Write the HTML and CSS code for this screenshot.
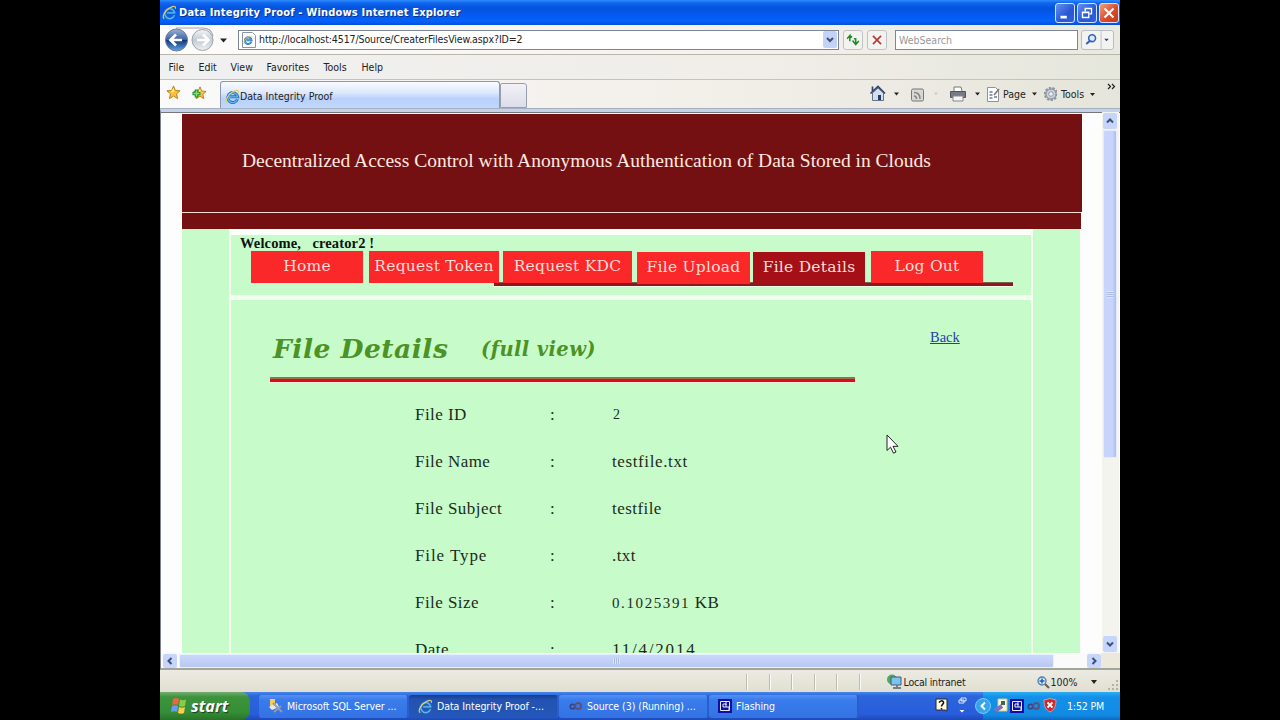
FILE: index.html
```html
<!DOCTYPE html>
<html lang="en">
<head>
<meta charset="utf-8">
<title>Data Integrity Proof - Windows Internet Explorer</title>
<link rel="stylesheet" href="styles.css">
</head>
<body>
<svg class="defs" width="0" height="0">
  <defs>
    <linearGradient id="orb" x1="0" y1="0" x2="0" y2="1"><stop offset="0" stop-color="#9cb4d4"/><stop offset=".48" stop-color="#3a63a4"/><stop offset=".52" stop-color="#12377c"/><stop offset="1" stop-color="#5fa8e8"/></linearGradient>
    <linearGradient id="orb2" x1="0" y1="0" x2="0" y2="1"><stop offset="0" stop-color="#f4f6f8"/><stop offset=".5" stop-color="#c3cad2"/><stop offset="1" stop-color="#eef1f4"/></linearGradient>
    <symbol id="ie" viewBox="0 0 16 16">
      <path d="M13.300 10.800A5.300 5.300 0 1 1 13.500 8.300H5.500" fill="none" stroke="#1f6fc0" stroke-width="3.200"/>
      <path d="M13.300 10.800A5.300 5.300 0 1 1 13.500 8.300H5.500" fill="none" stroke="#62b9f0" stroke-width="1.300"/>
      <path d="M2.400 14.600C-.6 12.800 3 6.500 8 3.300c4-2.600 7.400-2.300 6.200.7" fill="none" stroke="#e3cf6c" stroke-width="1.200"/>
    </symbol>
    <symbol id="star" viewBox="0 0 16 16"><path d="M8 1l2 4.800 5 .4-3.800 3.300 1.200 5L8 11.800l-4.400 2.700 1.200-5L1 6.200l5-.4z" fill="#fcc23c" stroke="#b87912"/><path d="M8 3l1 4-4 1z" fill="#fff1a4"/></symbol>
    <symbol id="app" viewBox="0 0 14 14"><rect width="14" height="14" fill="#1010a0"/><path d="M2.500 2.500h9v9h-9zM5 5h3v3H5zM8 8h3v3M8 2v4" fill="none" stroke="#e8e8ff"/></symbol>
    <symbol id="inf" viewBox="0 0 14 8"><circle cx="4" cy="4.500" r="2.300" fill="none" stroke="#33448c" stroke-width="1.600"/><circle cx="9.600" cy="4" r="3" fill="none" stroke="#5a5276" stroke-width="1.800"/></symbol>
  </defs>
</svg>
<div class="window">
  <div class="titlebar">
    <svg width="15" height="15"><use href="#ie"/></svg>
    <span class="title">Data Integrity Proof - Windows Internet Explorer</span>
    <div class="winbtns">
      <svg class="wb" viewBox="0 0 20 20"><path d="M5 14.500h7" stroke="#fff" stroke-width="3"/></svg>
      <svg class="wb" viewBox="0 0 20 20"><path d="M8 8V5h7v6h-2M5 9h7v6H5zM5 9.500h7" fill="none" stroke="#fff" stroke-width="1.500"/></svg>
      <svg class="wb close" viewBox="0 0 20 20"><path d="M5 5l10 10M15 5L5 15" stroke="#fff" stroke-width="2.300"/></svg>
    </div>
  </div>

  <div class="addressbar">
    <svg class="navorbs" width="66" height="28" viewBox="0 0 66 28">
      <path d="M16 2h27c6 0 9 4 10 8" fill="none" stroke="#a3a8ae" stroke-width="1.200"/>
      <circle cx="16.500" cy="14" r="11" fill="url(#orb)" stroke="#6f7f98"/>
      <path d="M22 14H11.500M16 8.500L10.500 14l5.500 5.500" fill="none" stroke="#fff" stroke-width="2.700"/>
      <circle cx="42.500" cy="14" r="10.500" fill="url(#orb2)" stroke="#9ba3ac"/>
      <path d="M37 14h10.500M43 8.500l5.500 5.500-5.500 5.500" fill="none" stroke="#fbfcfd" stroke-width="2.700"/>
      <path d="M60 12.500h7l-3.500 4z" fill="#222"/>
    </svg>
    <div class="urlbox">
      <svg width="16" height="16" viewBox="0 0 16 16"><path d="M1.500.5h10l3 3v12h-13z" fill="#fff" stroke="#8b93a5"/><use href="#ie" x="2" y="3" width="10" height="10"/></svg>
      <span class="url">http://localhost:4517/Source/CreaterFilesView.aspx?ID=2</span>
      <svg class="drop" viewBox="0 0 14 15"><path d="M4 6l3 3 3-3" fill="none" stroke="#39517c" stroke-width="2"/></svg>
    </div>
    <svg class="sqbtn" viewBox="0 0 20 20"><path d="M3.500 8.500L6.500 5v6.500M6.500 5l2.500 2M9.500 10.500L13 15l3.500-4M13 15V8.500h-2" fill="none" stroke="#268a2c" stroke-width="1.700"/></svg>
    <svg class="sqbtn stop" viewBox="0 0 20 20"><path d="M5.500 5.500l9 9M14.500 5.500l-9 9" stroke="#b93a3e" stroke-width="1.900"/></svg>
    <div class="search">WebSearch</div>
    <svg class="findbtn" viewBox="0 0 33 20"><path d="M20.500 0v20" stroke="#b9bdc4"/><circle cx="10.500" cy="8" r="3.800" fill="#dceafa" stroke="#3864b4" stroke-width="1.800"/><path d="M8 11l-4 3.500" stroke="#3864b4" stroke-width="2.300"/><path d="M24 8.500h5l-2.500 3z" fill="#2c4478"/></svg>
  </div>

  <div class="menubar"><span>File</span><span>Edit</span><span>View</span><span>Favorites</span><span>Tools</span><span>Help</span></div>

  <div class="commandbar">
    <svg class="fav" width="50" height="20" viewBox="0 0 50 20"><use href="#star" x="0" y="2" width="15" height="15"/><use href="#star" x="27" y="3" width="14" height="14"/><path d="M30.500 6.500v8M26.500 10.500h8" stroke="#218c2e" stroke-width="3.600"/><path d="M30.500 7.500v6M27.500 10.500h6" stroke="#8ae078" stroke-width="1.400"/></svg>
    <div class="tab"><svg width="15" height="15"><use href="#ie"/></svg><span>Data Integrity Proof</span></div>
    <div class="newtab"></div>
    <div class="cmds">
      <svg width="131" height="20" viewBox="0 0 131 20">
        <path d="M3.500 9v7.500h11V9L9 4z" fill="#d3deef" stroke="#66718a"/><path d="M1.500 9.500L9 2.500l7 7M3.500 8V2.500" fill="none" stroke="#30466d" stroke-width="1.700"/><path d="M9 11h3v5H9z" fill="#263c66"/>
        <path d="M25 8.500h5l-2.500 3z" fill="#222"/>
        <rect x="42.500" y="5" width="12" height="12" rx="1.500" fill="#d7d7d5" stroke="#777"/><path d="M45 8.500c4 0 6 2.500 6 6.500M45 12c2 0 2.500 1 2.500 3" fill="none" stroke="#858585" stroke-width="1.500"/>
        <path d="M65 8.500h4l-2 2.500z" fill="#c8c8c2"/>
        <path d="M85 7V3h7l1 4" fill="#fff" stroke="#777"/><path d="M81.500 7.500h15v6h-15z" fill="#777a82" stroke="#50545e"/><path d="M84 12h10v5H84z" fill="#f3f4f7" stroke="#888"/>
        <path d="M106 8.500h5l-2.500 3z" fill="#222"/>
        <path d="M118.500 3.500h8l3 3v11h-11z" fill="#fff" stroke="#8f9297"/><path d="M120.500 8h3M120.500 11h3M120.500 14h3M125 13h3" stroke="#667b9c" stroke-width="1.500"/><path d="M125 11l5-6" stroke="#777" stroke-width="1.500"/>
      </svg>
      <span class="page-l">Page</span>
      <svg width="30" height="20" viewBox="0 0 30 20"><path d="M5 8.500h5l-2.500 3z" fill="#222"/><circle cx="24" cy="10" r="5.800" fill="#cbd1da" stroke="#8e959f" stroke-width="2.600" stroke-dasharray="2.300 1.200"/><circle cx="24" cy="10" r="5" fill="#cbd1da" stroke="#858e9c"/><circle cx="24" cy="10" r="2.300" fill="#f0f1ef" stroke="#9099a6"/></svg>
      <span class="tools-l">Tools</span>
      <svg width="30" height="26" viewBox="0 0 30 26"><path d="M4 12h5l-2.500 3z" fill="#222"/><path d="M22 3l2.500 2.500L22 8M26 3l2.500 2.500L26 8" fill="none" stroke="#222" stroke-width="1.200"/></svg>
    </div>
  </div>

  <div class="viewport">
    <div class="page">
      <div class="banner">Decentralized Access Control with Anonymous Authentication of Data Stored in Clouds</div>
      <div class="strip"></div>
      <div class="columns">
        <div class="side left"></div>
        <div class="center">
          <div class="top">
            <div class="welcome">Welcome,&nbsp;&nbsp; creator2 !</div>
            <div class="nav">
              <a class="w1">Home</a><a class="w2">Request Token</a><a class="w3">Request KDC</a><a class="w4 low">File Upload</a><a class="w5 low current">File Details</a><a class="w6">Log Out</a>
            </div>
            <div class="navline"></div>
          </div>
          <div class="details">
            <div class="heading"><h1>File Details</h1><h2>(full view)</h2><a class="back">Back</a></div>
            <div class="rule"></div>
            <div class="fields">
              <span>File ID</span><span>:</span><span class="id">2</span>
              <span>File Name</span><span>:</span><span class="name">testfile.txt</span>
              <span>File Subject</span><span>:</span><span>testfile</span>
              <span class="type">File Type</span><span>:</span><span>.txt</span>
              <span>File Size</span><span>:</span><span class="size"><small>0.1025391</small> KB</span>
              <span>Date</span><span>:</span><span class="date">11/4/2014</span>
            </div>
          </div>
        </div>
        <div class="side right"></div>
      </div>
    </div>
    <div class="vscroll">
      <svg class="sbtn" viewBox="0 0 14 16"><path d="M4 9.500l3-3 3 3" fill="none" stroke="#39517c" stroke-width="2"/></svg>
      <div class="vthumb"><i></i></div>
      <div class="vtrack"></div>
      <svg class="sbtn" viewBox="0 0 14 16"><path d="M4 6.500l3 3 3-3" fill="none" stroke="#39517c" stroke-width="2"/></svg>
    </div>
  </div>
  <div class="hscroll">
    <svg class="hbtn" viewBox="0 0 14 14"><path d="M8.500 4l-3 3 3 3" fill="none" stroke="#39517c" stroke-width="2"/></svg>
    <div class="hthumb"><i></i></div>
    <div class="htrack"></div>
    <svg class="hbtn" viewBox="0 0 14 14"><path d="M5.500 4l3 3-3 3" fill="none" stroke="#39517c" stroke-width="2"/></svg>
    <div class="corner"></div>
  </div>

  <div class="status">
    <i></i><i></i><i></i><i></i><i></i><i></i>
    <div class="zone"><svg width="17" height="16" viewBox="0 0 17 16"><circle cx="6" cy="5.500" r="5" fill="#4dac62"/><path d="M5 3h10v8H5z" fill="#7cc3ef" stroke="#455b78"/><path d="M7 14h8M11 11v3" stroke="#71808c" stroke-width="2"/></svg><span>Local intranet</span></div>
    <div class="zoom"><svg width="13" height="13" viewBox="0 0 13 13"><circle cx="5" cy="5" r="4" fill="#d6ebfb" stroke="#4d80b4" stroke-width="1.300"/><path d="M2.500 5h5M5 2.500v5" stroke="#285eaa" stroke-width="1.500"/><path d="M8 8l4 4" stroke="#635e58" stroke-width="2.200"/></svg><span>100%</span><svg class="zd" width="28" height="18" viewBox="0 0 28 18"><path d="M0 7h6l-3 4z" fill="#222"/><path d="M25 8h2M21 12h2M25 12h2M17 16h2M21 16h2M25 16h2" stroke="#b5b39f" stroke-width="2"/></svg></div>
  </div>

  <div class="taskbar">
    <div class="start"><svg width="18" height="18" viewBox="0 0 18 18"><path d="M3 2q3-2 6 0L8 8Q5 6.500 2 8z" fill="#ee6542"/><path d="M10 2.500q3 1.500 6 0L15 9q-3 1.500-6 0z" fill="#8bcb4a"/><path d="M2 9q3-1.500 6 0l-1 6q-3-1.500-6 0z" fill="#6b9cf1"/><path d="M9 10q3 1.500 6 0l-1 6q-3 1.500-6 0z" fill="#f8cf42"/></svg><span>start</span></div>
    <div class="task t1"><svg width="15" height="16" viewBox="0 0 15 16"><path d="M2 1h5v8H2z" fill="#f4cd5d"/><path d="M1 9l8-4 2 4-7 3z" fill="#e7e8ea"/><path d="M5 5l9 9M13 8l-7 6" stroke="#929bab" stroke-width="2"/></svg><span>Microsoft SQL Server ...</span></div>
    <div class="task t2 active"><svg width="15" height="15"><use href="#ie"/></svg><span>Data Integrity Proof -...</span></div>
    <div class="task t3"><svg width="15" height="8"><use href="#inf"/></svg><span>Source (3) (Running) ...</span></div>
    <div class="task t4"><svg width="14" height="14"><use href="#app"/></svg><span>Flashing</span></div>
    <svg class="lang" width="34" height="28" viewBox="0 0 34 28"><path d="M1 7h11v12l-2-1H1z" fill="#fffbe3" stroke="#292921"/><path d="M4 10.500q2.500-3 4.500-.5c1 2-2 2-2 4.500M6.500 16v1.500" fill="none" stroke="#111" stroke-width="1.500"/><path d="M26 6h5v3h-5zM24 8h5v3h-5z" fill="#2c61da" stroke="#dbe7ff"/><path d="M24.500 18h5L27 20.500z" fill="#fff"/></svg>
    <div class="tray">
      <svg width="82" height="28" viewBox="0 0 82 28">
        <circle cx="0" cy="14" r="7.500" fill="#36a4ed" stroke="#74ccff"/><path d="M2 10.500L-1.500 14 2 17.500" fill="none" stroke="#fff" stroke-width="2"/>
        <path d="M15 7h9v12h-9z" fill="#f8f7d8" stroke="#c8c79a"/><path d="M18 9h4v4h-4z" fill="#45634d"/><path d="M12 19l7-5" stroke="#7e71bb" stroke-width="4"/>
        <use href="#app" x="27" y="7" width="14" height="14"/><use href="#inf" x="43" y="10" width="15" height="8"/>
        <path d="M61 8l6-1.500L73 8c0 7-2 10-6 12-4-2-6-5-6-12z" fill="#d5272b" stroke="#b9a6a8"/><path d="M64.500 10.500l5 5M69.500 10.500l-5 5" stroke="#fff" stroke-width="1.800"/>
      </svg><span>1:52 PM</span>
    </div>
  </div>
  <svg class="cursor" width="14" height="21" viewBox="0 0 14 21"><path d="M1 1v15.500l3.500-3.300 3 6 2.500-1.200-3-5.700H12z" fill="#fff" stroke="#222"/></svg>
</div>
</body>
</html>
```
FILE: styles.css
```css
* { box-sizing: border-box; }
body { margin: 0; width: 1280px; height: 720px; background: #000; overflow: hidden; font: 10.5px/1 "DejaVu Sans Condensed", "DejaVu Sans", sans-serif; font-stretch: condensed; color: #222; }
svg { display: block; flex: none; }
span, a { white-space: nowrap; }
.defs { position: absolute; }
.window { position: relative; width: 960px; height: 720px; margin: 0 auto; background: #ece9d8; overflow: hidden; }

.titlebar { display: flex; align-items: center; height: 25px; padding: 0 1px 0 2px; background: linear-gradient(#2f8bff 0, #0f66ee 3px, #0453dd 8px, #0459ee 14px, #0562fa 21px, #0350d8 25px); }
.title { margin-left: 2px; color: #fff; font-weight: bold; font-size: 11px; letter-spacing: .19px; text-shadow: 1px 1px #0b3389; }
.winbtns { display: flex; gap: 2px; margin-left: auto; }
.wb { width: 20px; height: 20px; border: 1px solid #d5e2ff; border-radius: 3px; background: linear-gradient(135deg, #6491ef, #2756d0 60%, #2f63dd); }
.wb.close { background: linear-gradient(135deg, #f0a080, #dc4b28 55%, #c43b19); }

.addressbar { display: flex; align-items: center; height: 30px; background: linear-gradient(90deg, #fdfcfb, #f5f1ed 60%, #e8e9e1); border-bottom: 1px solid #b8b5aa; }
.navorbs { margin-right: 12px; overflow: visible; }
.urlbox { display: flex; align-items: center; width: 601px; height: 20px; border: 1px solid #7c8694; background: #fff; padding: 0 1px 0 2px; }
.url { margin-left: 2px; letter-spacing: -.1px; }
.drop { width: 14px; height: 17px; margin-left: auto; background: #c4d2f7; border-radius: 2px; }
.sqbtn { width: 20px; height: 20px; margin-left: 4px; border: 1px solid #bfc2c6; border-radius: 3px; background: #f3f3ef; }
.sqbtn.stop { margin-left: 4px; }
.search { width: 183px; height: 20px; margin-left: 8px; padding: 0 3px; border: 1px solid #7c8694; background: #fff; color: #999; line-height: 19px; }
.findbtn { width: 33px; height: 20px; margin-left: 3px; border: 1px solid #b9bdc4; border-radius: 3px; background: #f3f4f1; }

.menubar { display: grid; grid-template-columns: 30px 32px 36px 57px 38px 60px; padding-left: 8.5px; height: 25px; align-items: center; background: linear-gradient(90deg, #eff0f0, #f1eee9 60%, #e5e6dc); border-bottom: 1px solid #c5c2b8; }

.commandbar { display: flex; align-items: flex-end; height: 29px; padding-left: 6px; background: linear-gradient(90deg, #fafafa, #f2eee8 60%, #e5e5db); border-bottom: 1px solid #a5b0c1; }
.fav { margin: 0 4px 3px 0; align-self: center; }
.tab { display: flex; align-items: center; width: 280px; height: 27px; padding: 2px 0 0 4px; border: 1px solid #8d98ab; border-bottom: 0; border-radius: 3px 3px 0 0; background: linear-gradient(#f9fbff, #dfe9fc 40%, #b8d1fb 65%, #c1d8fb); }
.newtab { width: 27px; height: 25px; border: 1px solid #989fac; border-radius: 2px 3px 0 0; background: linear-gradient(#f1f1f6, #dcdde9); }
.cmds { display: flex; align-items: center; margin-left: auto; height: 26px; padding-right: 4px; align-self: center; }
.page-l { width: 24px; margin-left: 3px; }
.tools-l { width: 25px; margin-left: 4px; }

.viewport { display: flex; height: 544px; border-top: 3px solid #c4d1e7; padding-left: 1px; border-left: 1px solid #7d828a; background: #fdfdfd; box-shadow: inset 0 1px #77777b; }
.page { width: 901px; margin: 2px 0 0 20px; height: 539px; overflow: hidden; }
.banner { width: 900px; height: 98px; padding: 37px 0 0 60px; background: #751012; color: #ffe9e0; font: 19.500px/20px "Liberation Serif", serif; white-space: nowrap; border-bottom: 1px solid #751012; }
.strip { width: 899px; height: 17px; border-top: 1px solid #f4dfd5; background: #751012; }
.columns { display: flex; width: 898px; height: 440px; }
.side { width: 47px; background: #c8fbca; }
.center { width: 804px; margin-top: 1px; border-left: 2px solid #f2fdf0; border-right: 2px solid #f2fdf0; background: #c8fbca; }
.top { height: 70px; border-top: 5px solid #fafff9; border-bottom: 5px solid #f2fff0; }
.welcome { padding-left: 9px; height: 16px; font: bold 14.500px/16px "Liberation Serif", serif; letter-spacing: .14px; color: #111; }
.nav { position: relative; z-index: 1; display: flex; align-items: flex-start; height: 32px; padding-left: 20px; }
.nav a { height: 32px; background: #fa2829; color: #ffdcd8; font: 15.500px/30px "DejaVu Serif", serif; font-stretch: normal; letter-spacing: .25px; text-align: center; }
.nav .low { margin-top: 1px; }
.nav .w1 { width: 112px; margin-right: 6px; }
.nav .w2 { width: 130px; margin-right: 4px; }
.nav .w3 { width: 129px; margin-right: 5px; }
.nav .w4 { width: 113px; margin-right: 3px; }
.nav .w5 { width: 112px; margin-right: 6px; }
.nav .w6 { width: 112px; }
.nav .current { background: #a41015; }
.navline { width: 519px; height: 5px; margin: -1px 0 0 263px; background: #8f171a; border-top: 1px solid #76624d; border-bottom: 1px solid #f0fae8; }
.heading { display: flex; height: 77px; padding: 32px 0 0 42px; align-items: flex-start; }
h1, h2 { margin: 0; color: #4b9324; font: italic bold 26.500px/34px "DejaVu Serif", serif; font-stretch: normal; letter-spacing: .5px; white-space: nowrap; }
h1 { width: 208px; }
h2 { font-size: 19.500px; line-height: 35px; letter-spacing: .4px; width: 449px; }
.back { color: #2340a8; text-decoration: underline; font: 14.500px/10px "Liberation Serif", serif; }
.rule { width: 585px; height: 6px; margin-left: 39px; background: #dc0c13; border-top: 2px solid #947050; border-bottom: 1px solid #f3eee2; }
.fields { display: grid; grid-template-columns: 135px 62px 200px; grid-auto-rows: 47px; padding: 8px 0 0 184px; font: 17px/47px "Liberation Serif", serif; letter-spacing: .45px; color: #1b2b1b; }
.fields .id { font-size: 14px; padding-left: 1px; }
.fields .name { letter-spacing: .62px; }
.fields .type { letter-spacing: .9px; }
.fields small { font-size: 15px; letter-spacing: 1.600px; }
.fields .date { letter-spacing: 1.800px; }

.vscroll { display: flex; flex-direction: column; width: 17px; margin-left: auto; margin-right: 1px; padding: 1px; background: #f4f4ee; }
.sbtn { width: 14px; height: 16px; border-radius: 2px; background: #c7d5fb; }
.vthumb { display: flex; align-items: center; justify-content: center; width: 14px; height: 328px; margin-top: 1px; border: 1px solid #e4ebff; border-radius: 2px; background: linear-gradient(90deg, #c7d5fd 70%, #a9bee9); }
.vthumb i { width: 6px; height: 7px; background: repeating-linear-gradient(#dce5ff 0 1px, #a9bbe4 1px 2px); }
.vtrack { flex: 1; }
.hscroll { display: flex; height: 17px; align-items: center; padding-left: 2px; background: #fafafa; border-left: 1px solid #7d828a; border-bottom: 2px solid #a5a498; }
.hbtn { width: 14px; height: 14px; background: #c7d5fb; border-radius: 2px; }
.hthumb { display: flex; justify-content: center; align-items: center; width: 875px; height: 14px; margin-left: 2px; border: 1px solid #e8efff; border-radius: 2px; background: linear-gradient(#cad7fb, #b8c8f1); }
.hthumb i { width: 7px; height: 6px; background: repeating-linear-gradient(90deg, #dce5ff 0 1px, #a9bbe4 1px 2px); }
.htrack { width: 33px; }
.corner { flex: 1; height: 15px; background: #ece9dc; }

.status { display: flex; align-items: center; height: 22px; padding: 2px 0 0 586px; background: linear-gradient(#ecebe3, #e0dfd0); }
.status > i { width: 22.600px; height: 16px; border-left: 1px solid #bdbcae; box-shadow: inset 1px 0 #fbfbf5; }
.zone { display: flex; align-items: center; gap: 1px; width: 151px; padding-left: 4px; letter-spacing: -.22px; }
.zoom { display: flex; align-items: center; gap: 1px; padding-left: 4px; }
.zd { margin-left: 12px; }

.taskbar { display: flex; align-items: center; height: 28px; background: linear-gradient(#4389ec, #2c65dc 4px, #285ddb 22px, #1e49b5); color: #fff; }
.start { display: flex; align-items: center; width: 90px; height: 28px; padding-left: 10px; border-radius: 0 9px 9px 0; background: linear-gradient(#74ae70, #3c933c 5px, #358e36 20px, #28722a); font: italic bold 16.200px/28px "Open Sans", sans-serif; text-shadow: 1px 1px 1px #173f19; }
.start span { margin-left: 3px; }
.task { display: flex; align-items: center; height: 23px; width: 150px; padding-left: 9px; background: linear-gradient(#568ff2, #397ceb 5px, #3472e4); border-right: 2px solid #2a5ecc; border-radius: 3px; }
.task span { margin-left: 4px; letter-spacing: -.05px; }
.t1 { margin-left: 9px; }
.active { background: linear-gradient(#173e94, #2353b1 5px, #2457b9); }
.lang { margin-left: 76px; }
.tray { display: flex; align-items: center; width: 137px; height: 28px; margin-left: auto; background: linear-gradient(#2cacf4, #1490e8 5px, #128ae4 23px, #0d68bd); }
.tray svg { overflow: visible; }
.tray span { margin-left: 2px; letter-spacing: -.15px; }
.cursor { position: absolute; left: 726px; top: 434px; }
```
